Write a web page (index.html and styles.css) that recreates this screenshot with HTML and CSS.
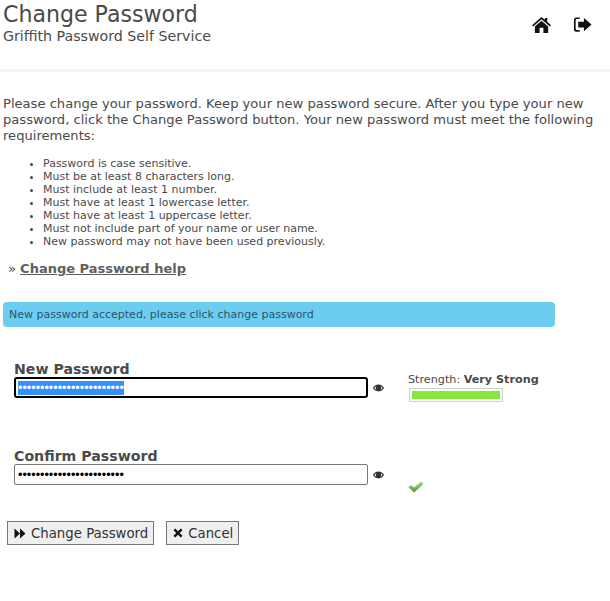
FILE: index.html
```html
<!DOCTYPE html>
<html lang="en">
<head>
    <meta charset="UTF-8">
    <meta name="viewport" content="width=device-width, initial-scale=1.0">
    <title>Change Password</title>
    <link rel="stylesheet" href="styles.css">
</head>
<body>
    <header class="header">
        <div class="titles">
            <h1>Change Password</h1>
            <p class="subtitle">Griffith Password Self Service</p>
        </div>
        <nav class="header-icons">
            <svg class="icon-home" viewBox="0 0 20 18"><path d="M10 0.5 L13.6 3.6 V1.5 H16 V5.7 L20 9.2 L18.8 10.5 L10 3 L1.2 10.5 L0 9.2 Z"/><path d="M10 4.6 L17 10.5 V17.5 H12 V12 H8 V17.5 H3 V10.5 Z"/></svg>
            <svg class="icon-logout" viewBox="0 0 20 18"><path d="M7 1 H3.5 C1.8 1 1 2 1 3.5 V13.5 C1 15 1.8 16 3.5 16 H7 V14.2 H4 C3.2 14.2 2.8 13.8 2.8 13 V4 C2.8 3.2 3.2 2.8 4 2.8 H7 Z"/><path d="M11.5 1.5 L19.5 8.5 L11.5 15.5 V11.5 H5.5 V5.5 H11.5 Z"/></svg>
        </nav>
    </header>

    <main class="content">
        <p class="intro">Please change your password. Keep your new password secure. After you type your new password, click the Change Password button. Your new password must meet the following requirements:</p>
        <ul class="rules">
            <li>Password is case sensitive.</li>
            <li>Must be at least 8 characters long.</li>
            <li>Must include at least 1 number.</li>
            <li>Must have at least 1 lowercase letter.</li>
            <li>Must have at least 1 uppercase letter.</li>
            <li>Must not include part of your name or user name.</li>
            <li>New password may not have been used previously.</li>
        </ul>
        <p class="help">&raquo; <a href="#">Change Password help</a></p>
        <div class="alert">New password accepted, please click change password</div>

        <form class="form">
            <div class="form-row">
                <div class="field">
                    <label for="newPassword">New Password</label>
                    <input type="password" id="newPassword" value="abcdefghijklmnopqrstuvwx">
                </div>
                <svg class="icon-eye" viewBox="0 0 12 8"><path fill-rule="evenodd" d="M6 0.3 C8.8 0.3 10.8 2 12 4 C10.8 6 8.8 7.7 6 7.7 C3.2 7.7 1.2 6 0 4 C1.2 2 3.2 0.3 6 0.3 Z M1.6 4 C2.2 4.8 2.9 5.4 3.6 5.8 A3.2 3.2 0 0 1 3.6 2.2 C2.9 2.6 2.2 3.2 1.6 4 Z M10.4 4 C9.8 3.2 9.1 2.6 8.4 2.2 A3.2 3.2 0 0 1 8.4 5.8 C9.1 5.4 9.8 4.8 10.4 4 Z"/></svg>
                <div class="strength">
                    <div>Strength: <b>Very Strong</b></div>
                    <div class="meter"><div class="meter-fill"></div></div>
                </div>
            </div>
            <div class="form-row form-row-confirm">
                <div class="field">
                    <label for="confirmPassword">Confirm Password</label>
                    <input type="password" id="confirmPassword" value="abcdefghijklmnopqrstuvwx">
                </div>
                <svg class="icon-eye" viewBox="0 0 12 8"><path fill-rule="evenodd" d="M6 0.3 C8.8 0.3 10.8 2 12 4 C10.8 6 8.8 7.7 6 7.7 C3.2 7.7 1.2 6 0 4 C1.2 2 3.2 0.3 6 0.3 Z M1.6 4 C2.2 4.8 2.9 5.4 3.6 5.8 A3.2 3.2 0 0 1 3.6 2.2 C2.9 2.6 2.2 3.2 1.6 4 Z M10.4 4 C9.8 3.2 9.1 2.6 8.4 2.2 A3.2 3.2 0 0 1 8.4 5.8 C9.1 5.4 9.8 4.8 10.4 4 Z"/></svg>
                <svg class="icon-check" viewBox="0 0 16 12">
                    <defs>
                        <linearGradient id="checkGreen" x1="0" y1="0" x2="0" y2="1">
                            <stop offset="0" stop-color="#a6e07a"/>
                            <stop offset="1" stop-color="#4f9a35"/>
                        </linearGradient>
                    </defs>
                    <path d="M0.3 6.3 L3 4 L6 6.4 L13 0.6 L15.7 3 L6.2 11.5 Z"/>
                </svg>
            </div>
            <div class="buttons">
                <button type="button" class="btn">
                    <svg class="icon-forward" viewBox="0 0 12 11"><path d="M0.5 0.5 L6 5.5 L0.5 10.5 Z M6 0.5 L11.5 5.5 L6 10.5 Z"/></svg>
                    Change Password
                </button>
                <button type="button" class="btn">
                    <svg class="icon-cancel" viewBox="0 0 10 10"><path d="M2.2 0.5 L5 3.3 L7.8 0.5 L9.5 2.2 L6.7 5 L9.5 7.8 L7.8 9.5 L5 6.7 L2.2 9.5 L0.5 7.8 L3.3 5 L0.5 2.2 Z"/></svg>
                    Cancel
                </button>
            </div>
        </form>
    </main>

    <script>
        document.getElementById("newPassword").select();
    </script>
</body>
</html>
```

FILE: styles.css
```css
body {
    margin: 0;
    font-family: "DejaVu Sans", Verdana, sans-serif;
    font-size: 13.1px;
    color: #4a4a4a;
    background: #fff;
}
.header {
    display: flex;
    justify-content: space-between;
    height: 69px;
    padding: 0 3px;
    border-bottom: 3px solid #f5f5f5;
}
h1 {
    margin: 0;
    padding-top: 1px;
    font-size: 22.1px;
    line-height: 27px;
    font-weight: normal;
}
.subtitle {
    margin: 0;
    font-size: 14.2px;
    line-height: 17px;
}
.header-icons {
    display: flex;
    gap: 22px;
    padding: 16px 15px 0 0;
    align-items: flex-start;
}
.header-icons svg {
    width: 19px;
    height: 18px;
    fill: #111;
}
.content {
    padding: 0 3px;
}
.intro {
    margin: 0;
    padding-top: 24px;
    line-height: 16px;
}
.rules {
    margin: 13px 0 0;
    padding-left: 40px;
    font-size: 11px;
    line-height: 13px;
}
.help {
    margin: 13px 0 0 5px;
    font-size: 13px;
    line-height: 16px;
}
.help a {
    color: #5f5f5f;
    font-weight: bold;
}
.alert {
    width: 546px;
    height: 25px;
    margin-top: 25px;
    padding-left: 6px;
    background: #6dcdf1;
    border-radius: 4px;
    font-size: 11px;
    line-height: 26px;
    color: #2c5468;
}
.form {
    margin-top: 34px;
}
.form-row {
    display: flex;
    padding-left: 11px;
    height: 87px;
}
.field {
    width: 354px;
}
.field label {
    display: block;
    font-weight: bold;
    font-size: 14.15px;
    line-height: 16px;
}
.field input {
    display: block;
    box-sizing: border-box;
    width: 354px;
    height: 21px;
    padding: 1px 3px;
    border: 1px solid #777;
    border-radius: 2px;
    font-family: "Liberation Sans", sans-serif;
    font-size: 12.6px;
    color: #000;
}
.field input:focus {
    outline: none;
    border: 2px solid #000;
    border-radius: 3px;
    padding: 0 2px;
}
.field input::selection {
    background: #3390ff;
    color: #fff;
}
.icon-eye {
    width: 11px;
    height: 8px;
    margin: 23px 0 0 5px;
    fill: #333;
    flex: none;
}
.strength {
    margin: 12px 0 0 24px;
    font-size: 11.2px;
    line-height: 14px;
}
.meter {
    box-sizing: border-box;
    width: 94px;
    height: 14px;
    margin: 1px 0 0 1px;
    padding: 2px;
    border: 1px solid #c4dcc0;
}
.meter-fill {
    height: 100%;
    background: #85e83b;
}
.icon-check {
    width: 16px;
    height: 12px;
    margin: 33px 0 0 24px;
    fill: url(#checkGreen);
    flex: none;
}
.form-row-confirm {
    height: 73px;
}
.buttons {
    display: flex;
    gap: 12px;
    padding-left: 4px;
}
.btn {
    display: flex;
    align-items: center;
    gap: 5px;
    height: 24px;
    padding: 0 5px 0 6px;
    background: #efefef;
    border: 1px solid #767676;
    font-family: "DejaVu Sans", sans-serif;
    font-size: 13.3px;
    color: #333;
}
.btn svg {
    fill: #111;
}
.icon-forward {
    width: 12px;
    height: 11px;
}
.icon-cancel {
    width: 10px;
    height: 10px;
}
```
